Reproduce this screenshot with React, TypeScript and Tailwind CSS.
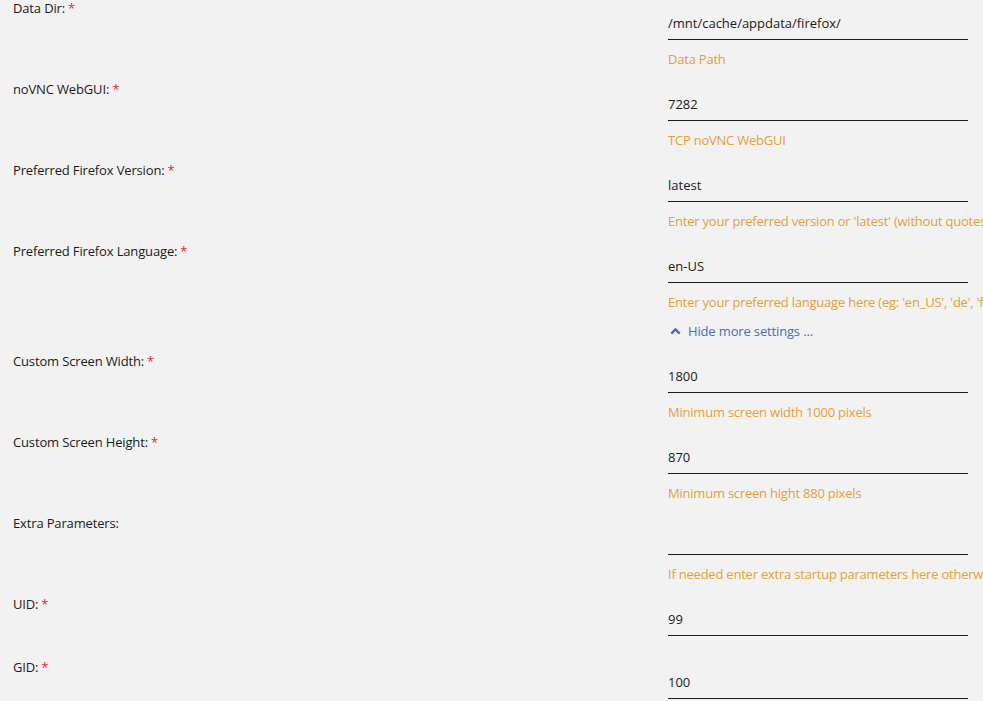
type Field = {
    label: string;
    required: boolean;
    value: string;
    hint?: string;
};

const topFields: Field[] = [
    { label: 'Data Dir:', required: true, value: '/mnt/cache/appdata/firefox/', hint: 'Data Path' },
    { label: 'noVNC WebGUI:', required: true, value: '7282', hint: 'TCP noVNC WebGUI' },
    { label: 'Preferred Firefox Version:', required: true, value: 'latest', hint: "Enter your preferred version or 'latest' (without quotes)" },
    { label: 'Preferred Firefox Language:', required: true, value: 'en-US', hint: "Enter your preferred language here (eg: 'en_US', 'de', 'fr', ...)" },
];

const moreFields: Field[] = [
    { label: 'Custom Screen Width:', required: true, value: '1800', hint: 'Minimum screen width 1000 pixels' },
    { label: 'Custom Screen Height:', required: true, value: '870', hint: 'Minimum screen hight 880 pixels' },
    { label: 'Extra Parameters:', required: false, value: '', hint: 'If needed enter extra startup parameters here otherwise leave empty' },
    { label: 'UID:', required: true, value: '99' },
    { label: 'GID:', required: true, value: '100' },
];

function FieldRow({ field }: { field: Field }) {
    return (
        <div className={`grid grid-cols-[668px_300px] ${field.hint ? 'pb-[14px]' : 'pb-[23px]'}`}>
            <div className="pl-[13px] leading-[16px] tracking-[-0.15px]">
                {field.label}
                {field.required && <span className="ml-[3px] text-[#e22828]">*</span>}
            </div>
            <div>
                <div className="h-[40px] border-b border-[#1c1b1b] pt-[15px] leading-[16px]">{field.value}</div>
                {field.hint && (
                    <div className="mt-[11px] whitespace-nowrap leading-[16px] tracking-[-0.22px] text-[#e6a038]">{field.hint}</div>
                )}
            </div>
        </div>
    );
}

export default function App() {
    return (
        <div className="h-[701px] w-[983px] overflow-hidden bg-[#f2f2f2] font-['Open_Sans',sans-serif] text-[13px] text-[#1c1b1b]">
            {topFields.map((field) => (
                <FieldRow key={field.label} field={field} />
            ))}

            <div className="grid h-[29px] grid-cols-[668px_300px]">
                <div />
                <div className="-mt-px flex items-center gap-[7px] self-start pl-[2px] leading-[16px] tracking-[-0.15px] text-[#486dba]">
                    <svg width="11" height="8" viewBox="0 0 11 8" fill="none">
                        <path d="M1.3 6.6 5.5 2.4 9.7 6.6" stroke="#486dba" strokeWidth="2.4" />
                    </svg>
                    <span>Hide more settings ...</span>
                </div>
            </div>

            {moreFields.map((field) => (
                <FieldRow key={field.label} field={field} />
            ))}
        </div>
    );
}
